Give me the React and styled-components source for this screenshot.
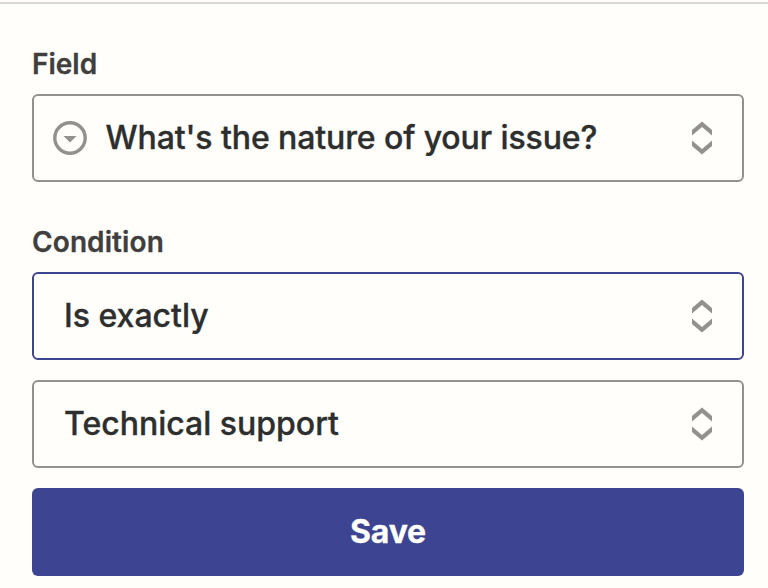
import styled, { createGlobalStyle } from "styled-components";

export default function App() {
    return (
        <Panel>
            <GlobalStyle />
            <Group>
                <Label>Field</Label>
                <Select type="button" $withIcon>
                    <DropdownIcon />
                    <Value $spacing="-0.1px">What's the nature of your issue?</Value>
                    <Arrows />
                </Select>
            </Group>
            <Group>
                <Label $spacing="0.1px">Condition</Label>
                <Select type="button" $active>
                    <Value>Is exactly</Value>
                    <Arrows />
                </Select>
                <Select type="button">
                    <Value>Technical support</Value>
                    <Arrows />
                </Select>
                <SaveButton type="button">Save</SaveButton>
            </Group>
        </Panel>
    );
}

function DropdownIcon() {
    return (
        <CircleIcon viewBox="0 0 34 34">
            <circle cx="17" cy="17" r="15.2" fill="none" stroke="#92918d" strokeWidth="3.4" />
            <path d="M10.5 15h13L17 21.5z" fill="#92918d" />
        </CircleIcon>
    );
}

function Arrows() {
    return (
        <ArrowsIcon viewBox="0 0 20 34">
            <path d="M0 9 10 .6 20 9v5.4L10 6 0 14.4zM0 19.6 10 28l10-8.4V25l-10 8.4L0 25z" fill="#92918d" />
        </ArrowsIcon>
    );
}

const GlobalStyle = createGlobalStyle`
    * {
        box-sizing: border-box;
    }
    body {
        margin: 0;
        background: #fffefa;
        overflow: hidden;
        font-family: 'Inter', sans-serif;
    }
`;
const Panel = styled.main`
    height: 586px;
    margin-top: 2px;
    padding: 42px 24px 0 32px;
    border-top: 2px solid #d7d6d3;
    display: flex;
    flex-direction: column;
    gap: 42px;
`;
const Group = styled.div`
    display: flex;
    flex-direction: column;
    gap: 20px;
`;
const Label = styled.label`
    height: 36px;
    margin-bottom: -8px;
    font-weight: 600;
    font-size: 28px;
    line-height: 36px;
    letter-spacing: ${({ $spacing }) => $spacing || "normal"};
    -webkit-text-stroke: 0.3px;
    color: #403f3e;
`;
const Select = styled.button`
    height: 88px;
    padding: 0 30px 0 ${({ $withIcon }) => ($withIcon ? "19px" : "30px")};
    border: 2px solid ${({ $active }) => ($active ? "#3d4592" : "#92918d")};
    border-radius: 6px;
    background: #fffefa;
    display: flex;
    align-items: center;
    font-family: inherit;
    color: #2d2e2e;
`;
const Value = styled.span`
    flex: 1;
    text-align: left;
    font-weight: 500;
    font-size: 32px;
    line-height: 40px;
    letter-spacing: ${({ $spacing }) => $spacing || "normal"};
    -webkit-text-stroke: 0.35px;
`;
const CircleIcon = styled.svg`
    width: 34px;
    height: 34px;
    margin-right: 18.5px;
`;
const ArrowsIcon = styled.svg`
    width: 20px;
    height: 34px;
`;
const SaveButton = styled.button`
    height: 88px;
    padding: 0 0 2px;
    border: none;
    border-radius: 6px;
    background: #3d4592;
    font-family: inherit;
    font-weight: 700;
    font-size: 32px;
    letter-spacing: -0.2px;
    -webkit-text-stroke: 0.3px;
    color: #fffefa;
`;
